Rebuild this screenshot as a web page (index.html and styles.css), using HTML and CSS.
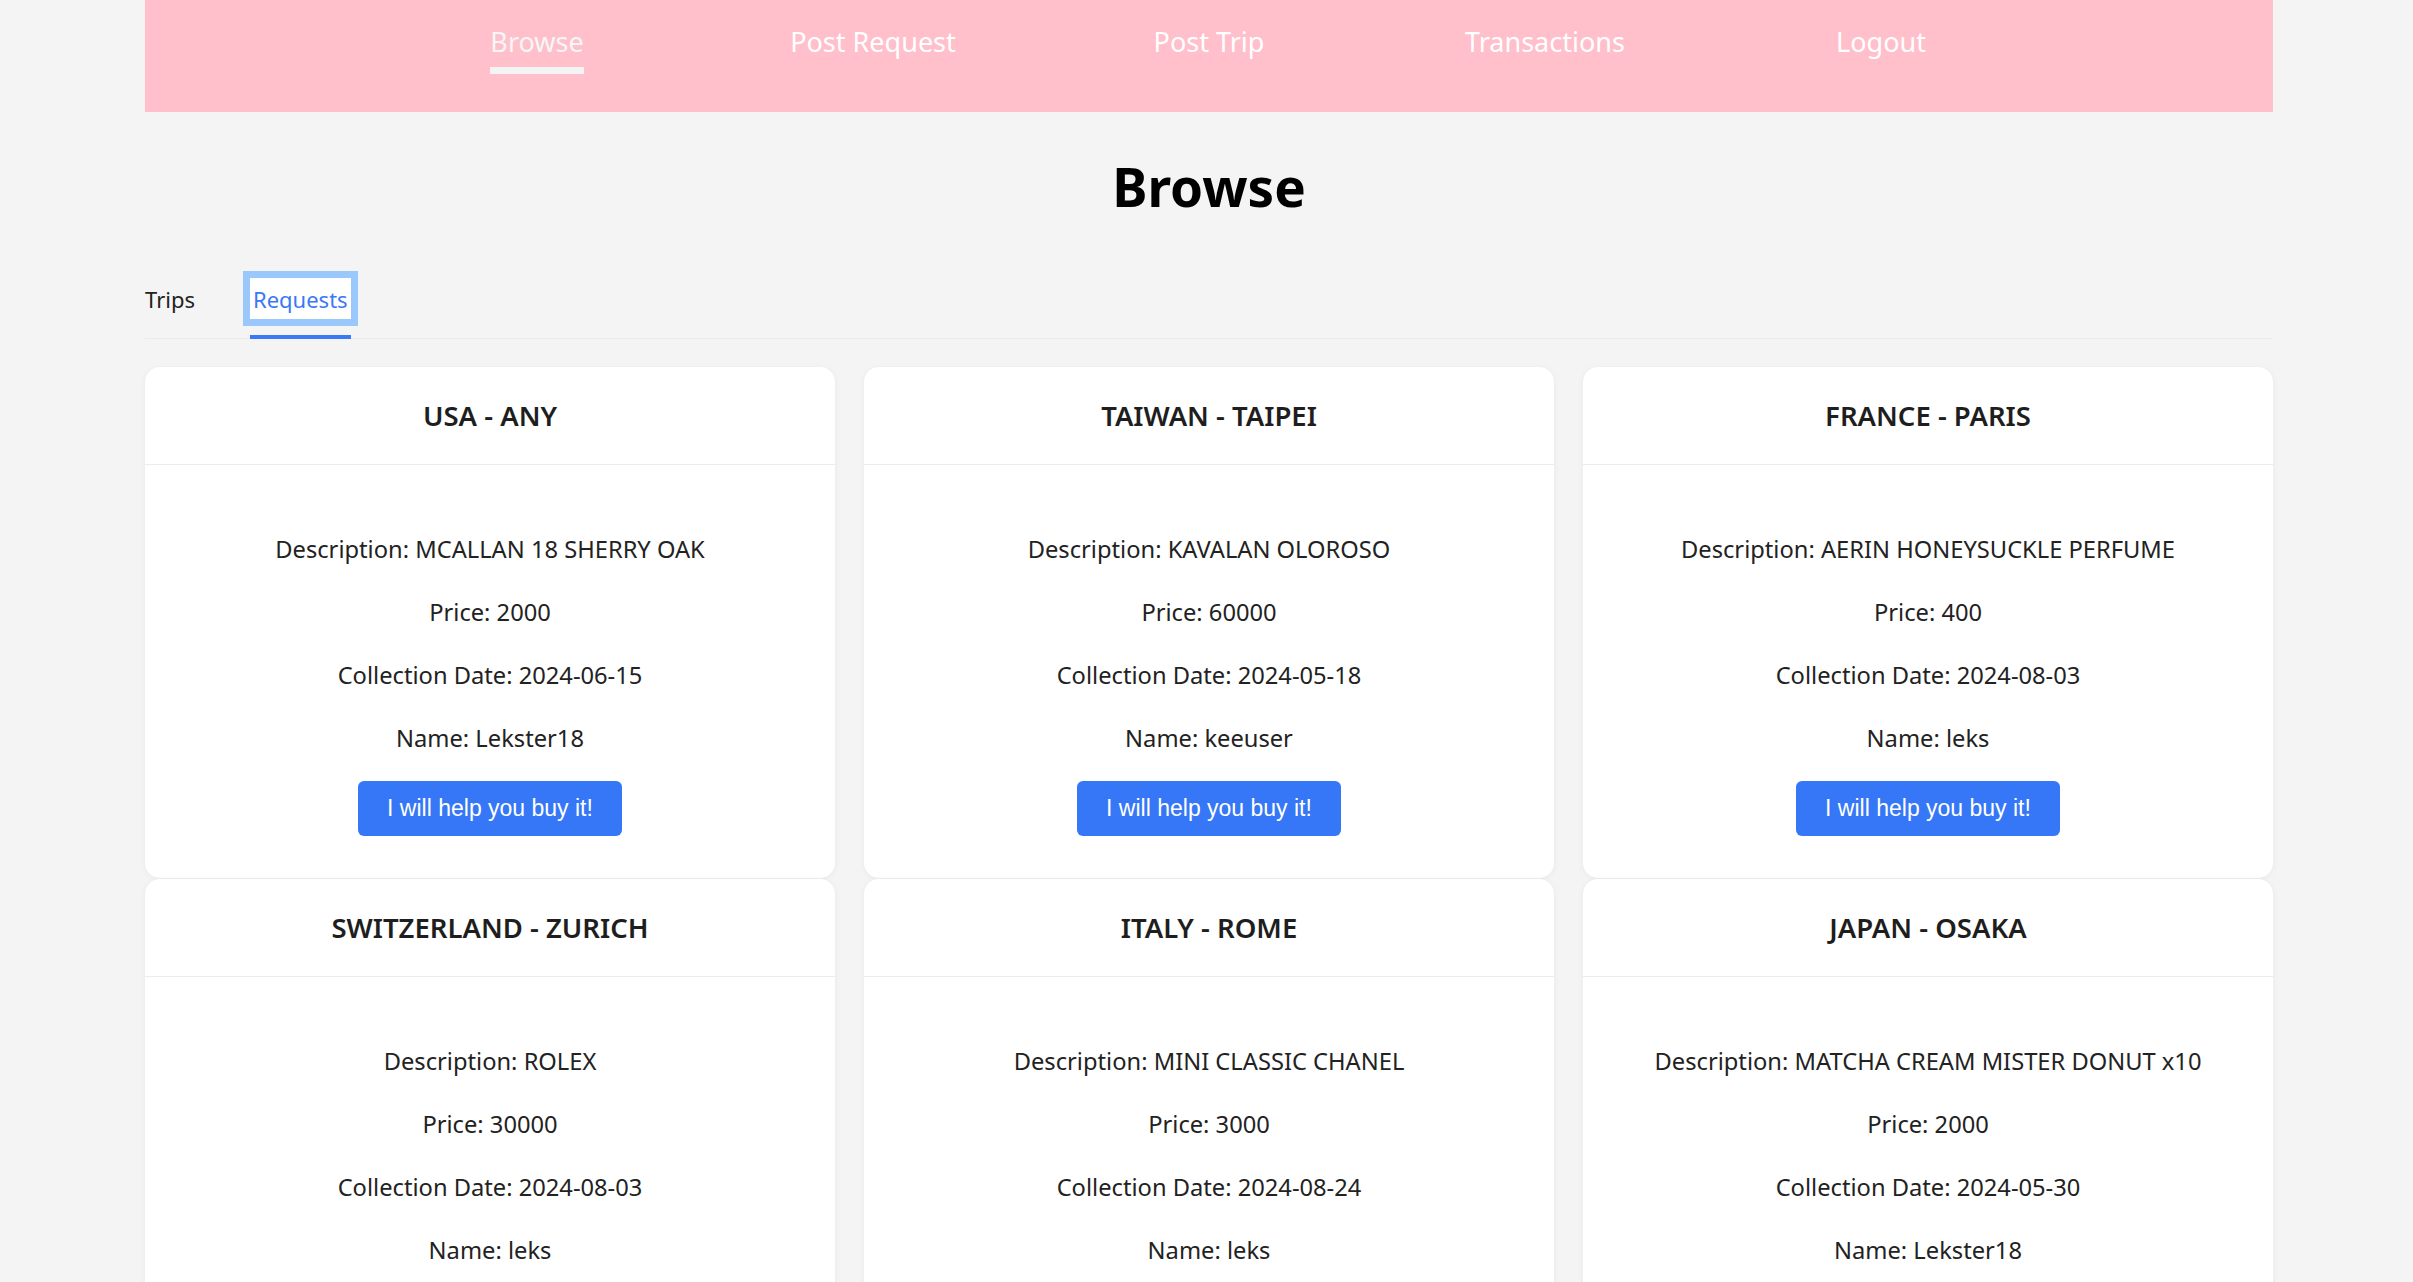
FILE: index.html
```html
<!DOCTYPE html>
<html lang="en">
<head>
<meta charset="utf-8">
<title>Browse</title>
<link rel="stylesheet" href="styles.css">
</head>
<body>
<div class="page">
  <nav class="topnav">
    <a class="navlink active" href="#">Browse</a>
    <a class="navlink" href="#">Post Request</a>
    <a class="navlink" href="#">Post Trip</a>
    <a class="navlink" href="#">Transactions</a>
    <a class="navlink" href="#">Logout</a>
  </nav>

  <h1 class="title">Browse</h1>

  <div class="tabs">
    <div class="tab"><button class="tab-btn">Trips</button></div>
    <div class="tab tab-active"><button class="tab-btn focused">Requests</button></div>
  </div>

  <div class="cards">
    <div class="card">
      <div class="card-head">USA - ANY</div>
      <div class="card-body">
        <p>Description: MCALLAN 18 SHERRY OAK</p>
        <p>Price: 2000</p>
        <p>Collection Date: 2024-06-15</p>
        <p>Name: Lekster18</p>
        <button class="help-btn">I will help you buy it!</button>
      </div>
    </div>
    <div class="card">
      <div class="card-head">TAIWAN - TAIPEI</div>
      <div class="card-body">
        <p>Description: KAVALAN OLOROSO</p>
        <p>Price: 60000</p>
        <p>Collection Date: 2024-05-18</p>
        <p>Name: keeuser</p>
        <button class="help-btn">I will help you buy it!</button>
      </div>
    </div>
    <div class="card">
      <div class="card-head">FRANCE - PARIS</div>
      <div class="card-body">
        <p>Description: AERIN HONEYSUCKLE PERFUME</p>
        <p>Price: 400</p>
        <p>Collection Date: 2024-08-03</p>
        <p>Name: leks</p>
        <button class="help-btn">I will help you buy it!</button>
      </div>
    </div>
    <div class="card">
      <div class="card-head">SWITZERLAND - ZURICH</div>
      <div class="card-body">
        <p>Description: ROLEX</p>
        <p>Price: 30000</p>
        <p>Collection Date: 2024-08-03</p>
        <p>Name: leks</p>
        <button class="help-btn">I will help you buy it!</button>
      </div>
    </div>
    <div class="card">
      <div class="card-head">ITALY - ROME</div>
      <div class="card-body">
        <p>Description: MINI CLASSIC CHANEL</p>
        <p>Price: 3000</p>
        <p>Collection Date: 2024-08-24</p>
        <p>Name: leks</p>
        <button class="help-btn">I will help you buy it!</button>
      </div>
    </div>
    <div class="card">
      <div class="card-head">JAPAN - OSAKA</div>
      <div class="card-body">
        <p>Description: MATCHA CREAM MISTER DONUT x10</p>
        <p>Price: 2000</p>
        <p>Collection Date: 2024-05-30</p>
        <p>Name: Lekster18</p>
        <button class="help-btn">I will help you buy it!</button>
      </div>
    </div>
  </div>
</div>
</body>
</html>
```

FILE: styles.css
```css
html {
  scrollbar-width: none;
}
html::-webkit-scrollbar {
  display: none;
}
body {
  margin: 0;
  padding: 0 0 0 5px;
  background: #f4f4f4;
  font-family: "Segoe UI", "Noto Sans", "Open Sans", sans-serif;
  color: #212121;
}
.page {
  width: 2128px;
  margin: 0 auto;
}

/* top navigation */
.topnav {
  height: 112px;
  box-sizing: border-box;
  padding-top: 24px;
  background: #ffc0cb;
  display: grid;
  grid-template-columns: repeat(5, 336px);
  justify-content: center;
  align-items: start;
}
.navlink {
  justify-self: center;
  font-size: 27px;
  line-height: 36px;
  color: #ffffff;
  text-decoration: none;
  padding-bottom: 7px;
  border-bottom: 7px solid transparent;
}
.navlink.active {
  color: #f6f6f6;
  border-bottom-color: #f4f4f4;
}

/* title */
.title {
  margin: 43px 0 0;
  text-align: center;
  font-size: 53px;
  line-height: 64px;
  font-weight: 700;
  color: #000;
}

/* tabs */
.tabs {
  margin-top: 59px;
  display: flex;
  gap: 52px;
  border-bottom: 1px solid #ebebeb;
}
.tab {
  padding-bottom: 16px;
  border-bottom: 4px solid transparent;
  margin-bottom: -1px;
}
.tab-active {
  border-bottom-color: #3b78f6;
}
.tab-btn {
  font-family: inherit;
  font-size: 22px;
  line-height: 30px;
  padding: 6px 3px 5px;
  margin: 0;
  border: 0;
  background: transparent;
  color: #222;
  cursor: pointer;
}
.tab:first-child .tab-btn {
  padding-left: 0;
}
.tab-btn.focused {
  background: #ffffff;
  color: #3b78f6;
  outline: 7px solid #9ac8fb;
}

/* cards */
.cards {
  margin-top: 28px;
  display: grid;
  grid-template-columns: repeat(3, 1fr);
  column-gap: 29px;
  row-gap: 1px;
}
.card {
  background: #ffffff;
  border-radius: 15px;
  box-shadow: 0 1px 6px rgba(0, 0, 0, 0.05);
  text-align: center;
}
.card-head {
  height: 97px;
  display: flex;
  align-items: center;
  justify-content: center;
  border-bottom: 1px solid #ececec;
  font-size: 27.5px;
  font-weight: 600;
  color: #1e1e1e;
}
.card-body {
  padding: 39px 20px 42px;
}
.card-body p {
  margin: 27px 0;
  font-size: 23.7px;
  line-height: 36px;
  color: #222;
}
.card-body p:last-of-type {
  margin-bottom: 25px;
}
.help-btn {
  font-family: "Liberation Sans", Arial, sans-serif;
  font-size: 23px;
  line-height: 27px;
  padding: 14px 29px;
  border: 0;
  border-radius: 6px;
  background: #3577f6;
  color: #ffffff;
  cursor: pointer;
}
```
